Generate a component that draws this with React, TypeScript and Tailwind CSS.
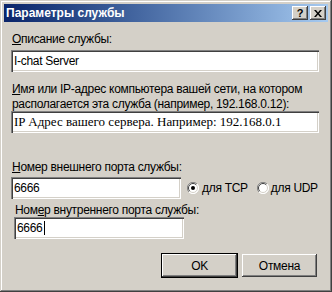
import React from "react";

const sunken =
  "shadow-[inset_1px_1px_#808080,inset_2px_2px_#404040,inset_-1px_-1px_#ffffff,inset_-2px_-2px_#d4d0c8]";
const raised =
  "shadow-[inset_-1px_-1px_#404040,inset_1px_1px_#ffffff,inset_-2px_-2px_#808080,inset_2px_2px_#d4d0c8]";

function Radio({ checked }: { checked: boolean }) {
  return (
    <svg width="12" height="12" viewBox="0 0 12 12" className="shrink-0">
      <circle cx="6" cy="6" r="5.5" fill="#ffffff" />
      <path d="M10 2 A5.5 5.5 0 0 0 2 10" fill="none" stroke="#808080" strokeWidth="1" />
      <path d="M9.2 2.8 A4.5 4.5 0 0 0 2.8 9.2" fill="none" stroke="#404040" strokeWidth="1" />
      <path d="M2 10 A5.5 5.5 0 0 0 10 2" fill="none" stroke="#ffffff" strokeWidth="1" />
      <path d="M2.8 9.2 A4.5 4.5 0 0 0 9.2 2.8" fill="none" stroke="#d4d0c8" strokeWidth="1" />
      {checked && <circle cx="6" cy="6" r="2" fill="#000000" />}
    </svg>
  );
}

export default function App() {
  const sans = { fontFamily: '"Liberation Sans", Arial, sans-serif' };
  const serif = { fontFamily: '"Liberation Serif", "Times New Roman", serif' };
  return (
    <div
      className="w-[332px] h-[292px] bg-[#d4d0c8] p-[4px] flex flex-col text-black text-[12px] leading-[14px] tracking-[-0.3px] shadow-[inset_-1px_-1px_#404040,inset_1px_1px_#d4d0c8,inset_-2px_-2px_#808080,inset_2px_2px_#ffffff]"
      style={sans}
    >
      <div className="h-[18px] bg-gradient-to-r from-[#0a246a] to-[#a6caf0] flex items-center pl-[2px] pr-[2px]">
        <span className="flex-1 font-bold text-white text-[12px] tracking-normal">Параметры службы</span>
        <div className="flex gap-[2px]">
          <div className={`w-[16px] h-[14px] bg-[#d4d0c8] ${raised} flex items-center justify-center`}>
            <span className="font-bold text-[11px] leading-[11px] text-black tracking-normal">?</span>
          </div>
          <div className={`w-[16px] h-[14px] bg-[#d4d0c8] ${raised} flex items-center justify-center`}>
            <svg width="8" height="7" viewBox="0 0 8 7">
              <path d="M0 0h2l2 2.5L6 0h2L5 3.5 8 7H6L4 4.5 2 7H0l3-3.5z" fill="#000" />
            </svg>
          </div>
        </div>
      </div>

      <div className="mt-[10px] ml-[8px] h-[14px]">
        <u>О</u>писание службы:
      </div>
      <div className={`mt-[4px] ml-[7px] w-[308px] h-[22px] bg-white ${sunken} flex items-center pl-[3px]`}>
        I-chat Server
      </div>

      <div className="mt-[10px] ml-[8px] h-[30px] leading-[15px]">
        <u>И</u>мя или IP-адрес компьютера вашей сети, на котором
        <br />
        располагается эта служба (например, 192.168.0.12):
      </div>
      <div
        className={`mt-[-1px] ml-[7px] w-[308px] h-[22px] bg-white ${sunken} flex items-center pl-[3px] text-[13px] tracking-normal`}
        style={serif}
      >
        IP Адрес вашего сервера. Например: 192.168.0.1
      </div>

      <div className="mt-[27px] ml-[8px] h-[14px]">
        <u>Н</u>омер внешнего порта службы:
      </div>
      <div className="mt-[3px] ml-[7px] flex items-center">
        <div className={`w-[170px] h-[22px] bg-white ${sunken} flex items-center pl-[3px]`}>6666</div>
        <div className="ml-[6px] flex items-center">
          <Radio checked={true} />
          <span className="ml-[3px]">для TCP</span>
        </div>
        <div className="ml-[9px] flex items-center">
          <Radio checked={false} />
          <span className="ml-[2px]">для UDP</span>
        </div>
      </div>

      <div className="mt-[4px] ml-[11px] h-[14px]">
        Ном<u>е</u>р внутреннего порта службы:
      </div>
      <div className={`ml-[10px] w-[170px] h-[22px] bg-white ${sunken} flex items-center pl-[3px]`}>
        6666
        <span className="inline-block w-[1px] h-[14px] bg-black ml-[1px]" />
      </div>

      <div className="mt-[14px] pr-[11px] flex justify-end items-center gap-[4px]">
        <div className="w-[77px] h-[25px] border border-black">
          <div className={`w-full h-full bg-[#d4d0c8] ${raised} flex items-center justify-center`}>OK</div>
        </div>
        <div className={`w-[75px] h-[23px] bg-[#d4d0c8] ${raised} flex items-center justify-center`}>
          Отмена
        </div>
      </div>
    </div>
  );
}
